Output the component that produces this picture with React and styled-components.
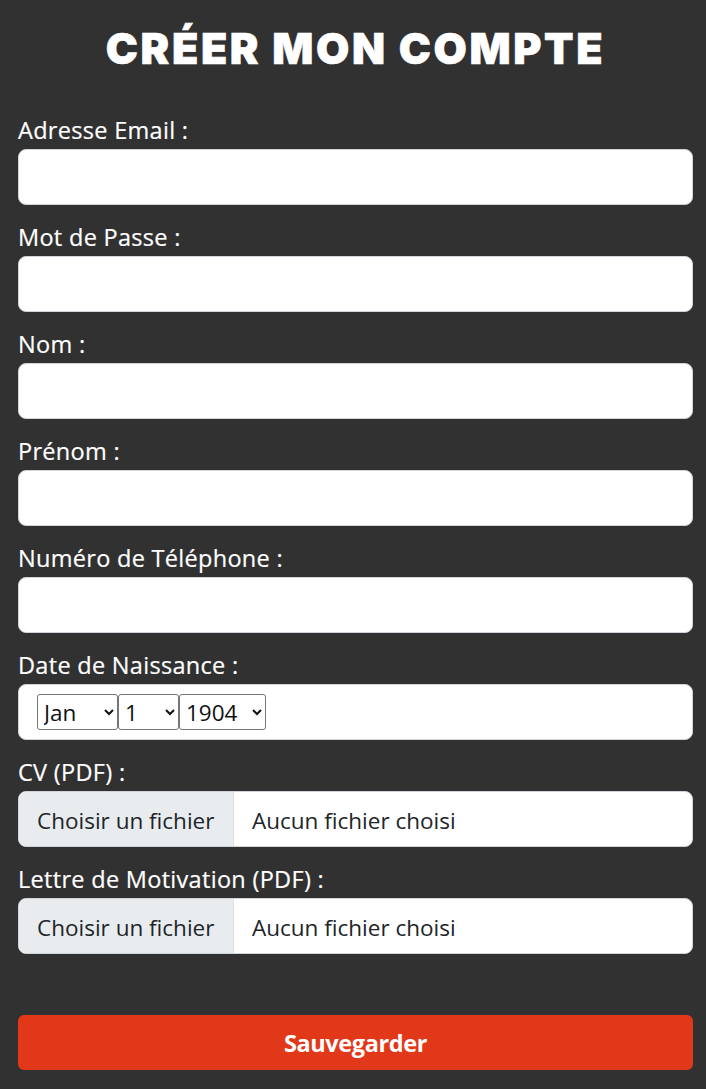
import React from 'react'
import styled, { createGlobalStyle } from 'styled-components'

const Global = createGlobalStyle`
  body {
    margin: 0;
    background: #313131;
  }
  * { box-sizing: border-box; }
`

const Page = styled.form`
  padding: 20px 13px 19px 18px;
  font-family: "Open Sans", "Liberation Sans", sans-serif;
  color: #fff;
`

const Title = styled.h1`
  margin: 0 0 41px;
  text-align: center;
  font-family: "Inter", "Liberation Sans", sans-serif;
  font-weight: 900;
  font-size: 43px;
  line-height: 56px;
  letter-spacing: 2.6px;
  color: #fff;
  -webkit-text-stroke: 0.6px #fff;
`

const Field = styled.div`
  display: flex;
  flex-direction: column;
  gap: 6px;
  margin-bottom: 19px;
`

const Label = styled.label`
  font-size: 23.5px;
  line-height: 26px;
  font-weight: 500;
  letter-spacing: 0.3px;
  color: #fff;
  -webkit-text-stroke: 0.2px #fff;
`

const Input = styled.input`
  height: 56px;
  width: 100%;
  border: 1px solid #ced4da;
  border-radius: 8px;
  background: #fff;
  padding: 0 18px;
  font-family: "Open Sans", sans-serif;
  font-size: 22px;
  outline: none;
`

const DateBox = styled.div`
  height: 56px;
  display: flex;
  align-items: center;
  border: 1px solid #ced4da;
  border-radius: 8px;
  background: #fff;
  padding: 0 18px;
`

const Select = styled.select`
  width: ${p => p.$w}px;
  height: 36px;
  margin: 0;
  font-family: "Open Sans", sans-serif;
  font-size: 22.5px;
  color: #111;
  border: 1px solid #767676;
  border-radius: 3px;
  background: #fff;
  padding: 0 0 0 2px;
`

const FileBox = styled.div`
  height: 56px;
  display: flex;
  align-items: stretch;
  border: 1px solid #ced4da;
  border-radius: 8px;
  background: #fff;
  overflow: hidden;
  font-family: "Open Sans", sans-serif;
  font-size: 22.5px;
  color: #212529;
`

const FileButton = styled.span`
  width: 215px;
  display: flex;
  align-items: center;
  padding-left: 18px;
  padding-top: 2px;
  background: #e9ecef;
  border-right: 1px solid #dee2e6;
  white-space: nowrap;
`

const FileName = styled.span`
  display: flex;
  align-items: center;
  padding-left: 18px;
  padding-top: 2px;
`

const Submit = styled.button`
  margin-top: 42px;
  width: 100%;
  height: 55px;
  border: none;
  border-radius: 6px;
  background: #e2381a;
  color: #fff;
  font-family: "Open Sans", sans-serif;
  font-weight: 700;
  font-size: 23.5px;
  letter-spacing: -0.4px;
`

const fields = [
  { label: 'Adresse Email :', type: 'email' },
  { label: 'Mot de Passe :', type: 'password' },
  { label: 'Nom :', type: 'text' },
  { label: 'Prénom :', type: 'text' },
  { label: 'Numéro de Téléphone :', type: 'tel' },
]

export default function App() {
  return (
    <>
      <Global />
      <Page onSubmit={e => e.preventDefault()}>
        <Title>CRÉER MON COMPTE</Title>
        {fields.map(f => (
          <Field key={f.label}>
            <Label>{f.label}</Label>
            <Input type={f.type} />
          </Field>
        ))}
        <Field>
          <Label>Date de Naissance :</Label>
          <DateBox>
            <Select $w={81} defaultValue="Jan">
              <option>Jan</option>
              <option>Feb</option>
            </Select>
            <Select $w={61} defaultValue="1">
              <option>1</option>
              <option>2</option>
            </Select>
            <Select $w={87} defaultValue="1904">
              <option>1904</option>
              <option>1905</option>
            </Select>
          </DateBox>
        </Field>
        <Field>
          <Label>CV (PDF) :</Label>
          <FileBox>
            <FileButton>Choisir un fichier</FileButton>
            <FileName>Aucun fichier choisi</FileName>
          </FileBox>
        </Field>
        <Field>
          <Label>Lettre de Motivation (PDF) :</Label>
          <FileBox>
            <FileButton>Choisir un fichier</FileButton>
            <FileName>Aucun fichier choisi</FileName>
          </FileBox>
        </Field>
        <Submit type="submit">Sauvegarder</Submit>
      </Page>
    </>
  )
}
